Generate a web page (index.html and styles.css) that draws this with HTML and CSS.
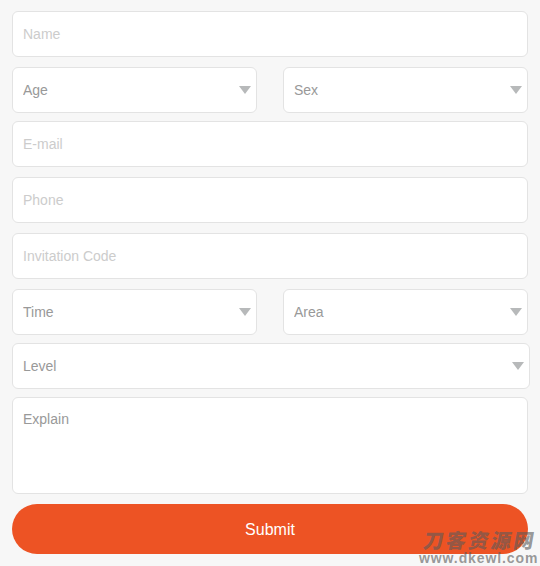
FILE: index.html
```html
<!DOCTYPE html>
<html lang="en">
<head>
    <meta charset="UTF-8">
    <meta name="viewport" content="width=device-width, initial-scale=1.0">
    <title>Form</title>
    <link rel="stylesheet" href="styles.css">
</head>
<body>
    <form class="form">
        <input class="field" type="text" placeholder="Name">
        <div class="row">
            <div class="select">
                <select class="field"><option>Age</option></select>
            </div>
            <div class="select">
                <select class="field"><option>Sex</option></select>
            </div>
        </div>
        <input class="field" type="text" placeholder="E-mail">
        <input class="field" type="text" placeholder="Phone">
        <input class="field" type="text" placeholder="Invitation Code">
        <div class="row">
            <div class="select">
                <select class="field"><option>Time</option></select>
            </div>
            <div class="select">
                <select class="field"><option>Area</option></select>
            </div>
        </div>
        <div class="select level">
            <select class="field"><option>Level</option></select>
        </div>
        <textarea class="field explain" placeholder="Explain"></textarea>
        <button class="submit" type="button">Submit</button>
    </form>

    <!-- site mark -->
    <div class="mark">
        <div class="mark-name">刀客资源网</div>
        <div class="mark-url">www.dkewl.com</div>
    </div>
</body>
</html>
```

FILE: styles.css
```css
* {
    box-sizing: border-box;
}
body {
    margin: 0;
    height: 566px;
    overflow: hidden;
    position: relative;
    background-color: #f7f7f7;
    font-family: Arial, "Liberation Sans", "Noto Sans CJK SC", sans-serif;
}
.form {
    padding: 11px 12px 0;
}
.field {
    display: block;
    width: 100%;
    height: 46px;
    margin: 0 0 10px;
    padding: 0 10px;
    border: 1px solid #e3e3e3;
    border-radius: 6px;
    background-color: #fff;
    color: #999;
    font-family: inherit;
    font-size: 14px;
    outline: none;
    appearance: none;
}
.field::placeholder {
    color: #ccc;
}
.row {
    display: flex;
    gap: 26px;
    margin-bottom: 8px;
}
.select {
    flex: 1;
    position: relative;
}
.select .field {
    margin: 0;
}
/* dropdown arrow */
.select::after {
    content: "";
    position: absolute;
    top: 19px;
    right: 6px;
    border: 6px solid transparent;
    border-top: 8px solid #b7b9ba;
    border-bottom: 0;
    pointer-events: none;
}
.level {
    width: 518px;
    margin-bottom: 8px;
}
.explain {
    height: 97px;
    padding-top: 13px;
    resize: none;
}
.explain::placeholder {
    color: #999;
}
.submit {
    display: block;
    width: 100%;
    height: 50px;
    padding: 2px 0 0;
    border: none;
    border-radius: 25px;
    background-color: #ed5324;
    color: #fff;
    font-family: inherit;
    font-size: 16px;
}
.mark {
    position: absolute;
    right: 0;
    bottom: 0;
    width: 121px;
    color: rgba(90, 90, 90, 0.62);
    font-weight: bold;
    white-space: nowrap;
}
.mark-name {
    margin-left: 5px;
    font-family: "Noto Sans CJK SC", sans-serif;
    font-size: 20px;
    font-weight: 900;
    line-height: 22px;
    letter-spacing: 2.5px;
    transform: skewX(-10deg);
}
.mark-url {
    font-size: 14px;
    line-height: 15px;
    letter-spacing: 0.9px;
}
```
